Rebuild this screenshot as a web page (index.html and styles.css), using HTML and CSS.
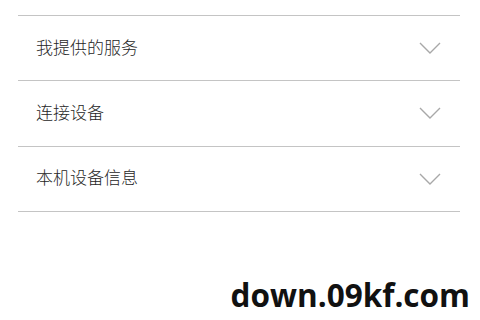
FILE: index.html
```html
<!DOCTYPE html>
<html lang="zh-CN">
<head>
  <meta charset="UTF-8">
  <title>设置</title>
  <link rel="stylesheet" href="styles.css">
</head>
<body>
  <div class="menu">
    <div class="menu-item">
      <span class="label">我提供的服务</span>
      <svg class="chevron" width="22" height="12" viewBox="0 0 22 12"><polyline points="1,1 11,11 21,1"/></svg>
    </div>
    <div class="menu-item">
      <span class="label">连接设备</span>
      <svg class="chevron" width="22" height="12" viewBox="0 0 22 12"><polyline points="1,1 11,11 21,1"/></svg>
    </div>
    <div class="menu-item">
      <span class="label">本机设备信息</span>
      <svg class="chevron" width="22" height="12" viewBox="0 0 22 12"><polyline points="1,1 11,11 21,1"/></svg>
    </div>
  </div>
  <div class="watermark">down.09kf.com</div>
</body>
</html>
```
FILE: styles.css
```css
* {
  margin: 0;
  padding: 0;
  box-sizing: border-box;
}

html, body {
  width: 480px;
  height: 320px;
  background-color: #fff;
  overflow: hidden;
}

body {
  position: relative;
  font-family: "Noto Sans CJK SC", "Noto Sans", sans-serif;
  padding-top: 15px;
}

.menu {
  margin: 0 20px 0 18px;
  border-top: 1px solid #c4c4c4;
}

.menu-item {
  display: flex;
  align-items: center;
  justify-content: space-between;
  height: 65.3px;
  padding: 0 19px 0 18px;
  border-bottom: 1px solid #c4c4c4;
}

.label {
  font-size: 17px;
  font-weight: 300;
  color: #262626;
  line-height: 1;
  margin-top: -4px;
}

.chevron polyline {
  fill: none;
  stroke: #a8a8a8;
  stroke-width: 1.4;
}

.watermark {
  position: absolute;
  right: 10px;
  bottom: 4px;
  font-family: "Open Sans", sans-serif;
  font-weight: 700;
  font-size: 31.5px;
  color: #111;
}
```
